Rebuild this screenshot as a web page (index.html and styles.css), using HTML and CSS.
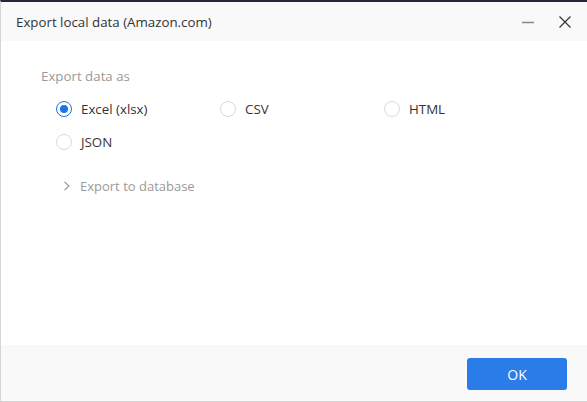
FILE: index.html
```html
<!DOCTYPE html>
<html>
<head>
<meta charset="utf-8">
<link rel="stylesheet" href="styles.css">
</head>
<body>
<div class="window">
  <div class="header">
    <div class="title">Export local data (Amazon.com)</div>
    <div class="controls">
      <span class="ctl min"><svg width="14" height="14" viewBox="0 0 14 14"><path d="M1 7.5h12" stroke="#888" stroke-width="1.5"/></svg></span>
      <span class="ctl close"><svg width="14" height="14" viewBox="0 0 14 14"><path d="M1.5 1.5l11 11M12.5 1.5l-11 11" stroke="#333" stroke-width="1.2"/></svg></span>
    </div>
  </div>
  <div class="content">
    <div class="label">Export data as</div>
    <div class="options">
      <label class="opt"><span class="radio checked"></span>Excel (xlsx)</label>
      <label class="opt"><span class="radio"></span>CSV</label>
      <label class="opt"><span class="radio"></span>HTML</label>
      <label class="opt"><span class="radio"></span>JSON</label>
    </div>
    <div class="db">
      <svg class="chev" width="8" height="10" viewBox="0 0 8 10"><path d="M1.5 1l4.5 4-4.5 4" fill="none" stroke="#999" stroke-width="1.1"/></svg>
      <span>Export to database</span>
    </div>
  </div>
  <div class="footer">
    <button class="ok">OK</button>
  </div>
</div>
</body>
</html>
```
FILE: styles.css
```css
html, body {
  margin: 0;
  padding: 0;
  background: #ffffff;
}
body {
  font-family: "Open Sans", "Noto Sans", sans-serif;
  font-size: 13px;
  color: #333;
}
.window {
  width: 587px;
  height: 402px;
  box-sizing: border-box;
  border-top: 2px solid #232a36;
  border-left: 1px solid #d6d6d6;
  border-bottom: 1px solid #d6d6d6;
  display: flex;
  flex-direction: column;
  background: #fff;
}
.header {
  height: 39px;
  background: #f9f9f9;
  display: flex;
  align-items: center;
  justify-content: space-between;
  padding-left: 15px;
  flex: none;
}
.title {
  font-size: 13.3px;
  color: #333;
}
.controls {
  display: flex;
  align-items: center;
  gap: 23px;
  padding-right: 15px;
}
.ctl {
  display: flex;
  width: 14px;
  height: 14px;
}
.content {
  flex: 1;
  padding: 25px 0 0 40px;
}
.label {
  color: #9a9a9a;
  font-size: 13.3px;
  line-height: 20px;
}
.options {
  display: grid;
  grid-template-columns: 164px 164px 164px;
  row-gap: 13px;
  margin-top: 13px;
  margin-left: 15px;
}
.opt {
  display: flex;
  align-items: center;
  gap: 9px;
  font-size: 13.3px;
  color: #333;
  line-height: 20px;
}
.radio {
  width: 16px;
  height: 16px;
  border: 1px solid #d9d9d9;
  border-radius: 50%;
  box-sizing: border-box;
  position: relative;
  flex: none;
}
.radio.checked {
  border-color: #1a73e8;
}
.radio.checked::after {
  content: "";
  position: absolute;
  left: 3px;
  top: 3px;
  width: 8px;
  height: 8px;
  border-radius: 50%;
  background: #1a73e8;
}
.db {
  display: flex;
  align-items: center;
  gap: 9px;
  margin-top: 24px;
  margin-left: 22px;
  color: #9a9a9a;
  font-size: 13px;
  line-height: 20px;
}
.footer {
  height: 56px;
  background: #f9f9f9;
  flex: none;
  display: flex;
  justify-content: flex-end;
  align-items: flex-start;
  padding: 13px 20px 0 0;
  box-sizing: border-box;
}
.ok {
  width: 100px;
  height: 32px;
  border: none;
  border-radius: 3px;
  background: #2a7de9;
  color: #fff;
  font-family: "Open Sans", "Noto Sans", sans-serif;
  font-size: 14px;
  padding: 0;
}
```
